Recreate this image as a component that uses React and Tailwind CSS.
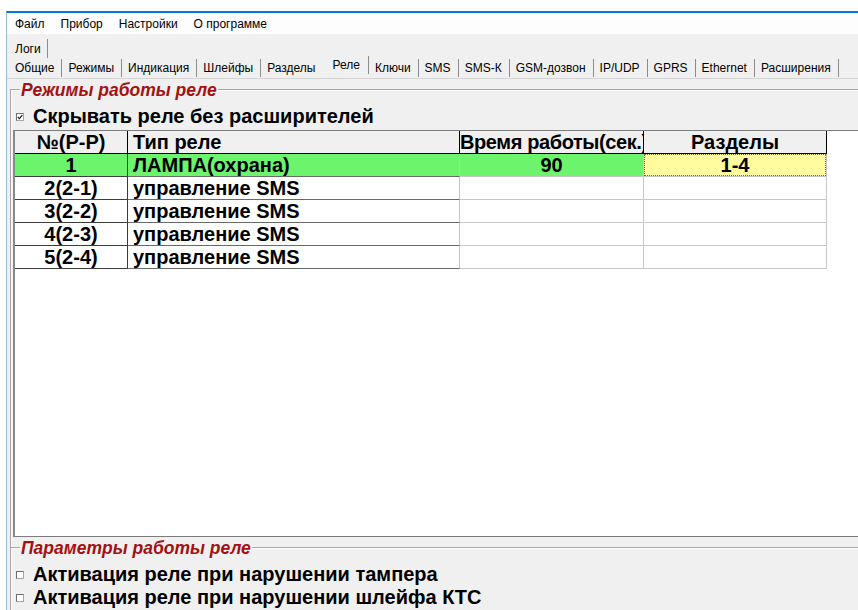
const MENU = ['Файл', 'Прибор', 'Настройки', 'О программе'];

const TABS = [
  'Общие',
  'Режимы',
  'Индикация',
  'Шлейфы',
  'Разделы',
  'Реле',
  'Ключи',
  'SMS',
  'SMS-К',
  'GSM-дозвон',
  'IP/UDP',
  'GPRS',
  'Ethernet',
  'Расширения',
];

const ACTIVE_TAB = 'Реле';

const ROWS = [
  { no: '1', type: 'ЛАМПА(охрана)', time: '90', parts: '1-4', active: true },
  { no: '2(2-1)', type: 'управление SMS' },
  { no: '3(2-2)', type: 'управление SMS' },
  { no: '4(2-3)', type: 'управление SMS' },
  { no: '5(2-4)', type: 'управление SMS' },
];

function CheckBox({ checked }) {
  return (
    <span className="w-[8px] h-[8px] shrink-0 flex items-center justify-center bg-white border border-[#a8a8a8] border-t-[#6f6f6f] border-l-[#6f6f6f]">
      {checked && (
        <svg viewBox="0 0 6 6" className="w-[6px] h-[6px]">
          <path d="M0.8 3 L2.4 4.6 L5.3 1.2" stroke="#1a1a1a" strokeWidth="1.2" fill="none" />
        </svg>
      )}
    </span>
  );
}

function CheckRow({ checked, children }) {
  return (
    <div className="flex items-center h-[23px] pl-[5px] text-[20px] leading-[23px] font-bold text-black">
      <CheckBox checked={checked} />
      <span className="ml-[9px] whitespace-nowrap">{children}</span>
    </div>
  );
}

function GroupBox({ title, className = '', children }) {
  return (
    <div className={`relative border-l border-t border-[#a6a6a6] shadow-[inset_1px_1px_0_#ffffff] ${className}`}>
      <span className="absolute left-[9px] -top-[10px] px-px bg-[#f0f0f0] text-[17.5px] leading-[20px] font-bold italic text-[#a31212] whitespace-nowrap">
        {title}
      </span>
      {children}
    </div>
  );
}

function Tabs() {
  return (
    <div className="border-b border-[#d4d4d4]">
      {/* back row */}
      <div className="h-[24px] flex items-start pl-[2px] pt-[1px]">
        <span className="mt-[4px] h-[19px] px-[6px] leading-[20px] border-r border-[#8c8c8c]">Логи</span>
      </div>
      {/* front row */}
      <div className="h-[20px] flex items-start pl-[2px] pt-[1px]">
        {TABS.map((t, i) => {
          const active = t === ACTIVE_TAB;
          const beforeActive = TABS[i + 1] === ACTIVE_TAB;
          return (
            <span
              key={t}
              className={`h-[18px] leading-[19px] whitespace-nowrap ${
                active ? '-mt-[3px] pl-[10px] pr-[8px] border-r border-[#8c8c8c]' : 'pl-[6px] pr-[7px]'
              } ${!active && !beforeActive ? 'border-r border-[#8c8c8c]' : ''}`}
            >
              {t}
            </span>
          );
        })}
      </div>
    </div>
  );
}

function RelayGrid() {
  const head = 'h-[23px] bg-[#f0f0f0] border-r border-b border-black whitespace-nowrap overflow-hidden';
  return (
    <div className="ml-[2px] mt-[2px] h-[407px] bg-white border-l-2 border-t border-b border-[#7c7c7c] border-l-[#8a8a8a] overflow-hidden">
      <div className="grid grid-cols-[113px_332px_184px_183px] w-max text-[20px] leading-[23px] font-bold text-black">
        <div className={`${head} text-center`}>№(Р-Р)</div>
        <div className={`${head} pl-[5px]`}>Тип реле</div>
        <div className={`${head} tracking-[-0.4px]`}>Время работы(сек.)</div>
        <div className={`${head} text-center`}>Разделы</div>

        {ROWS.map((r) => (
          <div key={r.no} className="contents">
            <div
              className={`h-[23px] text-center border-r border-b border-[#3c3c3c] ${r.active ? 'bg-[#6cf46c]' : 'bg-white'}`}
            >
              {r.no}
            </div>
            <div
              className={`h-[23px] pl-[5px] border-r border-b border-r-[#c4c4c4] border-b-[#6a6a6a] whitespace-nowrap ${
                r.active ? 'bg-[#6cf46c]' : ''
              }`}
            >
              {r.type}
            </div>
            <div
              className={`h-[23px] text-center border-r border-b border-[#c8c8c8] ${r.active ? 'bg-[#6cf46c]' : ''}`}
            >
              {r.time}
            </div>
            <div className="h-[23px] border-r border-b border-[#c8c8c8]">
              {r.active ? (
                <div className="h-full bg-[#fffb9e] border border-dotted border-[#6a6a6a] text-center leading-[21px]">
                  {r.parts}
                </div>
              ) : null}
            </div>
          </div>
        ))}
      </div>
    </div>
  );
}

export default function App() {
  return (
    <div className="w-[858px] h-[610px] overflow-hidden bg-white pt-[11px] pl-[6px] flex flex-col font-['Liberation_Sans',Arial,sans-serif]">
      <div className="flex-1 flex flex-col bg-[#f0f0f0] border-t-2 border-l border-t-[#0078d7] border-l-[#93bde3] text-[12px] text-black">
        {/* menu bar */}
        <div className="h-[21px] flex items-center bg-[#fdfdfd] pt-[2px]">
          {MENU.map((m) => (
            <span key={m} className="px-[8px] leading-[19px]">
              {m}
            </span>
          ))}
        </div>

        <Tabs />

        <div className="ml-[3px] mt-[10px]">
          <GroupBox title="Режимы работы реле" className="pt-[15px] pb-[10px]">
            <CheckRow checked>Скрывать реле без расширителей</CheckRow>
            <RelayGrid />
          </GroupBox>

          <GroupBox title="Параметры работы реле" className="pt-[15px] h-[80px]">
            <CheckRow>Активация реле при нарушении тампера</CheckRow>
            <CheckRow>Активация реле при нарушении шлейфа КТС</CheckRow>
          </GroupBox>
        </div>
      </div>
    </div>
  );
}
